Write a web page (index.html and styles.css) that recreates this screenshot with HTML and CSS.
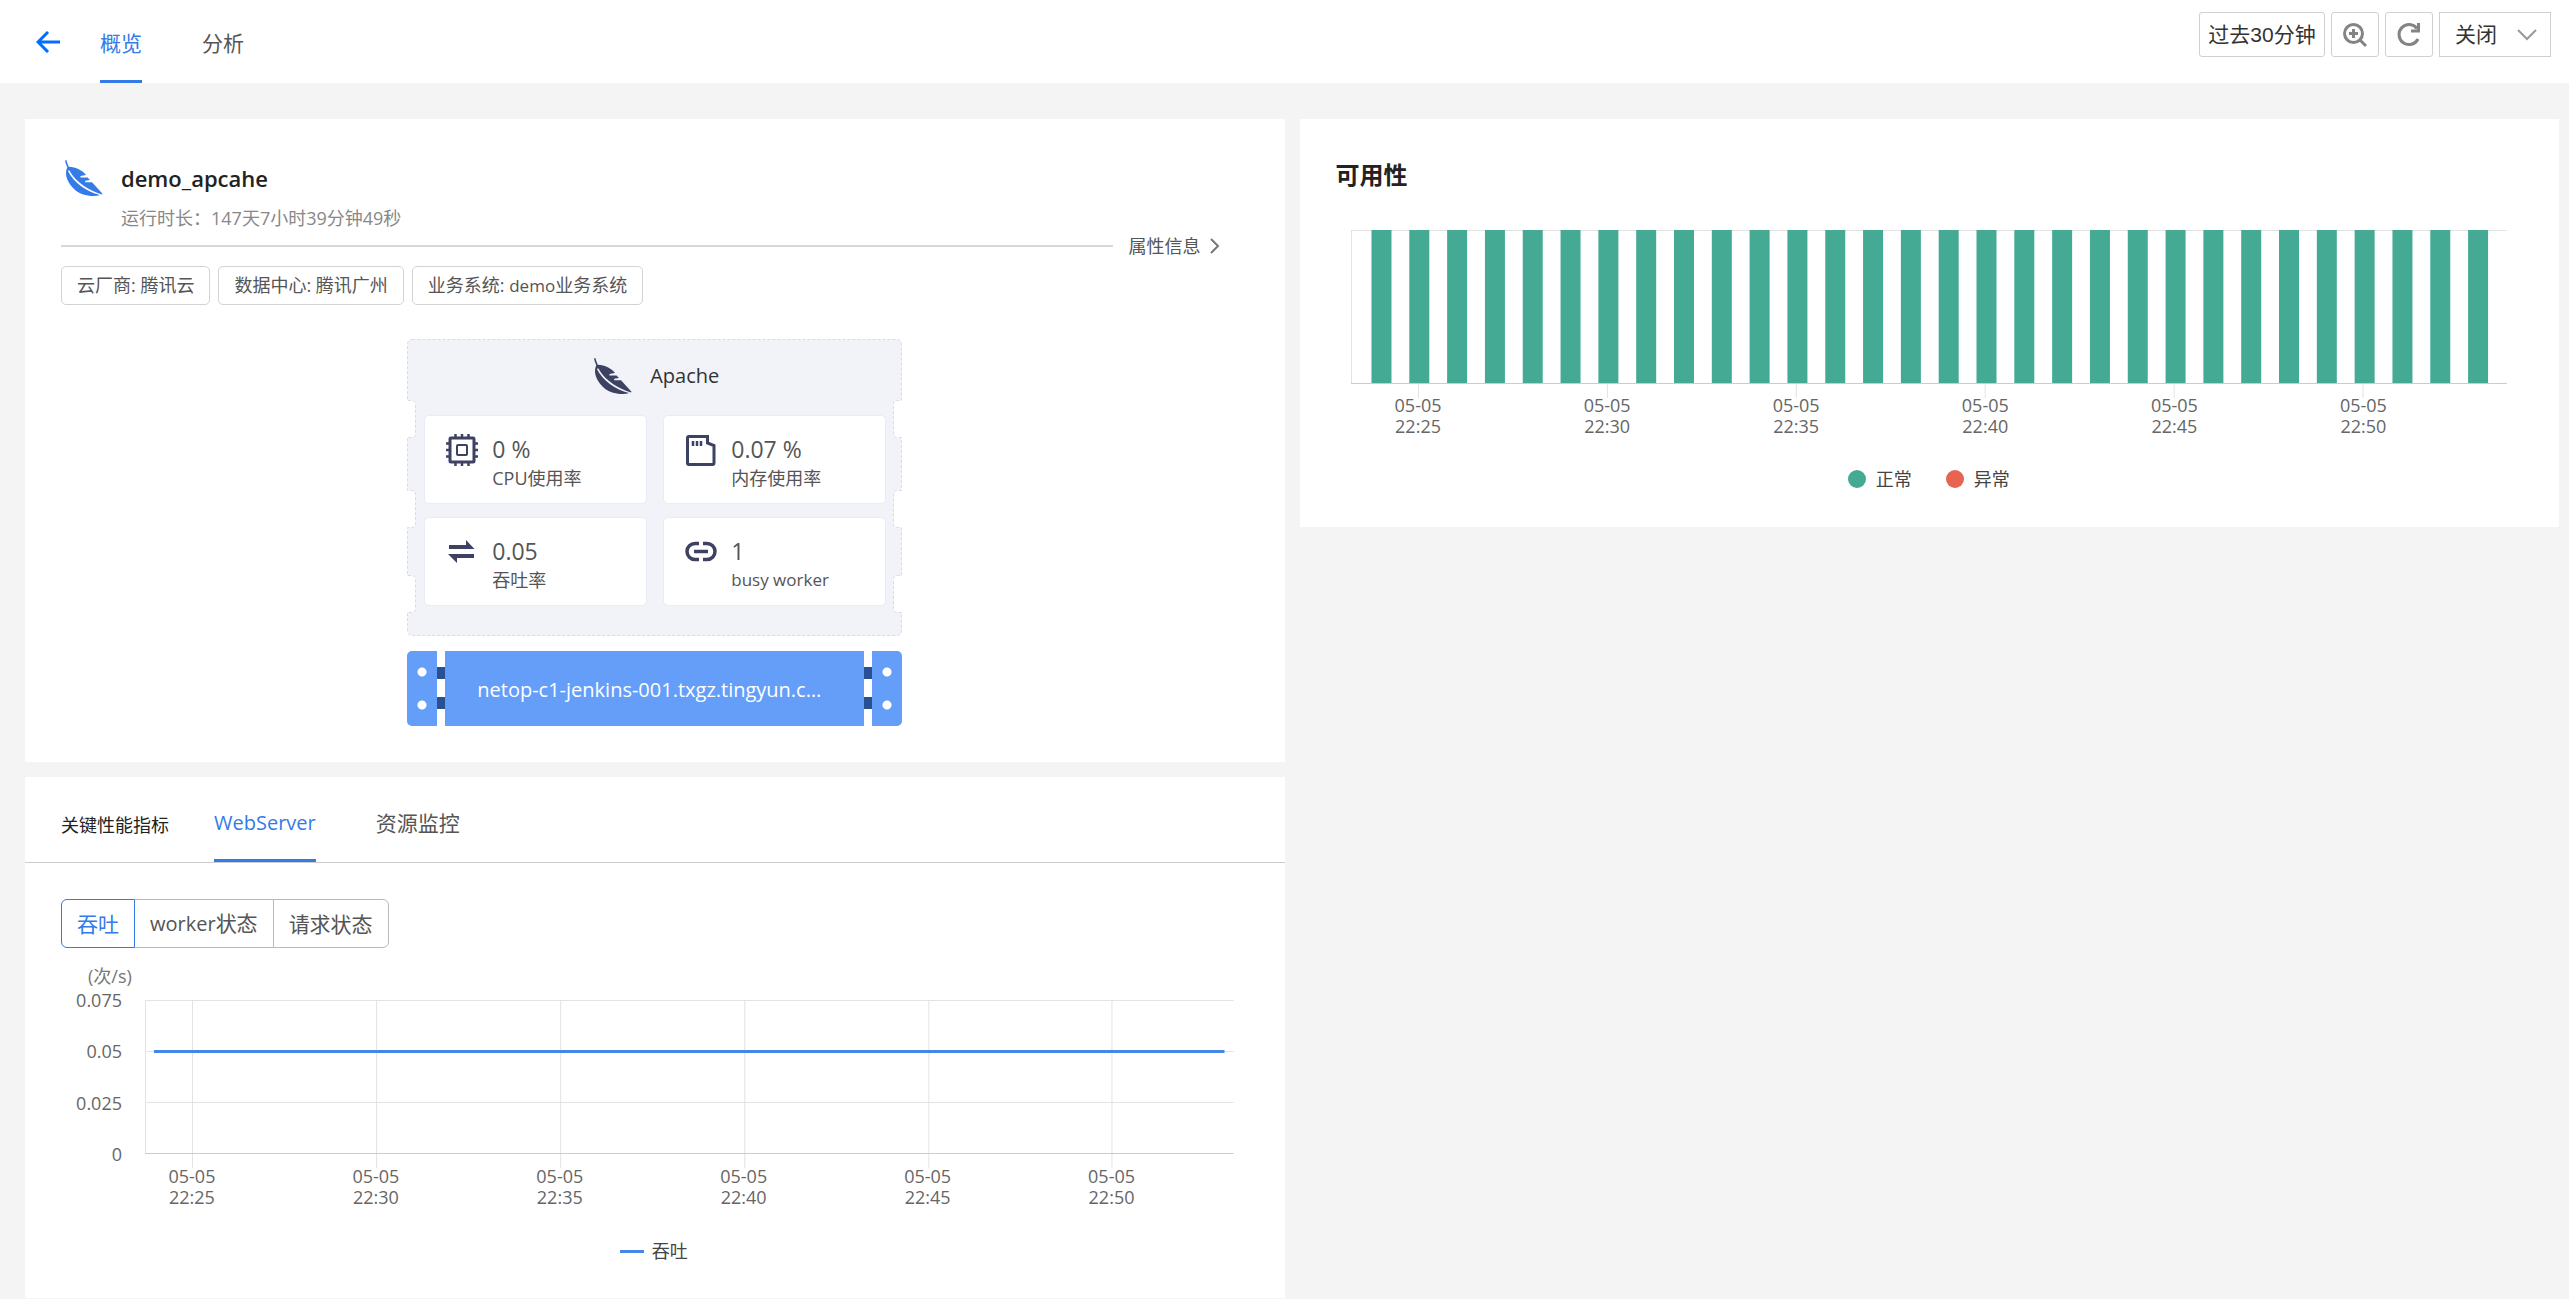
FILE: index.html
```html
<!DOCTYPE html>
<html lang="zh-CN">
<head>
<meta charset="utf-8">
<title>demo_apcahe</title>
<link rel="stylesheet" href="styles.css">
</head>
<body>
<svg class="defs" aria-hidden="true">
  <symbol id="feather" viewBox="0 0 38 36">
    <path d="M0 0.5L1.4 0C2 2.5 2.8 4.8 3.8 6.8C11 7 17.5 10.5 21 15L15.500 16L15.400 17.400L22.500 17.400L25 20L20.200 20.800L20.200 22.200L27 22.200L37.5 33.8L37 34.4C25.5 31 11.500 23.5 4.200 10.200L2.900 10.900C9.500 23.500 21 31 35 35C27 37.500 15.500 35.500 8.500 28.500C1 21 -0.500 13 2.300 7.200C1.200 5 0.500 2.800 0 0.500Z" fill="currentColor"/>
  </symbol>
</svg>

<header class="topbar">
  <button class="back" type="button" aria-label="返回">
    <svg width="24" height="22" viewBox="0 0 24 22"><path d="M12 1L2 11L12 21M2 11H24" fill="none" stroke="#006eff" stroke-width="3"/></svg>
  </button>
  <nav class="tabs">
    <a class="tab active" href="#overview">概览</a>
    <a class="tab" href="#analysis">分析</a>
  </nav>
  <div class="tools">
    <button class="tool range" type="button">过去30分钟</button>
    <button class="tool" type="button" aria-label="放大">
      <svg width="26" height="26" viewBox="0 0 26 26" fill="none" stroke="#848484" stroke-width="3"><circle cx="11.500" cy="11.500" r="9"/><path d="M18 18L24 24M7 11.500H16M11.500 7V16" /></svg>
    </button>
    <button class="tool" type="button" aria-label="刷新">
      <svg width="26" height="26" viewBox="0 0 26 26" fill="none" stroke="#848484" stroke-width="3"><path d="M22 17A10 10 0 1 1 21 6.500"/><path d="M22.500 1V9H15" /></svg>
    </button>
    <div class="select">
      <select aria-label="自动刷新"><option>关闭</option></select>
      <svg class="caret" width="20" height="12" viewBox="0 0 20 12"><path d="M1 1L10 10L19 1" fill="none" stroke="#999" stroke-width="2"/></svg>
    </div>
  </div>
</header>

<main class="board">
  <div class="column">
    <section class="card summary">
      <div class="identity">
        <svg class="feather" aria-hidden="true"><use href="#feather"/></svg>
        <div>
          <h1>demo_apcahe</h1>
          <p class="uptime">运行时长：147天7小时39分钟49秒</p>
        </div>
      </div>
      <div class="rule">
        <hr>
        <a href="#attributes">属性信息<svg width="10" height="16" viewBox="0 0 10 16"><path d="M1 1L8 8L1 15" fill="none" stroke="#777" stroke-width="2"/></svg></a>
      </div>
      <ul class="tags">
        <li>云厂商: 腾讯云</li>
        <li>数据中心: 腾讯广州</li>
        <li>业务系统: <span class="latin">demo</span>业务系统</li>
      </ul>

      <div class="rack">
        <svg class="rack-frame" viewBox="0 0 495 297" aria-hidden="true">
          <path d="M5.500 .5H489.500Q494.500 .5 494.500 5.500V61.500H490.500Q486.500 61.500 486.500 65.500V94.500Q486.500 98.500 490.500 98.500H494.500V151.500H490.500Q486.500 151.500 486.500 155.500V184.500Q486.500 188.500 490.500 188.500H494.500V236.500H490.500Q486.500 236.500 486.500 240.500V269.500Q486.500 273.500 490.500 273.500H494.500V291.500Q494.500 296.500 489.500 296.500H5.500Q.5 296.500 .5 291.500V273.500H4.500Q8.500 273.500 8.500 269.500V240.500Q8.500 236.500 4.500 236.500H.5V188.500H4.500Q8.500 188.500 8.500 184.500V155.500Q8.500 151.500 4.500 151.500H.5V98.500H4.500Q8.500 98.500 8.500 94.500V65.500Q8.500 61.500 4.500 61.500H.5V5.500Q.5 .5 5.500 .5Z" fill="#f2f3f9" stroke="#d9dae3" stroke-dasharray="3 2"/>
        </svg>
        <div class="rack-title">
          <svg class="feather" aria-hidden="true"><use href="#feather"/></svg>
          <h2>Apache</h2>
        </div>
        <div class="metrics">
          <div class="metric">
            <svg width="32" height="32" viewBox="0 0 32 32" fill="none" stroke="#3d4263"><rect x="4" y="4" width="24" height="24" rx="1" stroke-width="3"/><rect x="11" y="11" width="10" height="10" rx="1" stroke-width="2"/><path d="M9.500 0V4M16 0V4M22.500 0V4M9.500 28V32M16 28V32M22.500 28V32M0 9.500H4M0 16H4M0 22.500H4M28 9.500H32M28 16H32M28 22.500H32" stroke-width="2.500"/></svg>
            <div><strong>0 %</strong><span>CPU使用率</span></div>
          </div>
          <div class="metric">
            <svg width="32" height="32" viewBox="0 0 32 32" fill="none" stroke="#3d4263"><path d="M4 2.500H22.500V9L29 11.500V29Q29 30.500 27.500 30.500H4Q2.500 30.500 2.500 29V4Q2.500 2.500 4 2.500Z" stroke-width="3"/><path d="M8 7V12M12 7V12M16 7V12" stroke-width="2.500"/></svg>
            <div><strong>0.07 %</strong><span>内存使用率</span></div>
          </div>
          <div class="metric">
            <svg width="32" height="32" viewBox="0 0 32 32" fill="#3d4263"><path d="M3 9H20V4L28.500 13H3ZM28 18H2L11 27V22H28Z"/></svg>
            <div><strong>0.05</strong><span>吞吐率</span></div>
          </div>
          <div class="metric">
            <svg width="32" height="32" viewBox="0 0 32 32" fill="none" stroke="#3d4263" stroke-width="3.500"><path d="M14 7.500H10A8 8 0 0 0 10 23.500H14M18 7.500H22A8 8 0 0 1 22 23.500H18M9 15.500H23"/></svg>
            <div><strong>1</strong><span class="latin">busy worker</span></div>
          </div>
        </div>
      </div>

      <div class="server">
        <i class="cap"></i><i class="joint"></i>
        <span class="host">netop-c1-jenkins-001.txgz.tingyun.com</span>
        <i class="joint"></i><i class="cap"></i>
      </div>
    </section>

    <section class="card performance">
      <div class="section-head">
        <h2>关键性能指标</h2>
        <nav class="tabs">
          <a class="tab active" href="#webserver"><span class="latin-large">WebServer</span></a>
          <a class="tab" href="#resources">资源监控</a>
        </nav>
      </div>
      <div class="segments">
        <button class="on" type="button">吞吐</button><button type="button"><span class="latin-large">worker</span>状态</button><button type="button">请求状态</button>
      </div>
      <div class="unit">(次/s)</div>
      <div class="line-chart">
        <div class="y-labels"><span>0.075</span><span>0.05</span><span>0.025</span><span>0</span></div>
        <div class="plot-area">
          <svg class="plot" viewBox="0 0 1088 168" preserveAspectRatio="none">
            <path d="M0 .5H1088M0 51.500H1088M0 102.500H1088M.5 0V153M47.500 0V168M231.500 0V168M415.500 0V168M599.500 0V168M783.500 0V168M966.500 0V168" fill="none" stroke="#e3e3e3"/>
            <path d="M0 153.500H1088" stroke="#ccc"/>
            <path d="M9 51.500H1079" stroke="#4785ea" stroke-width="3"/>
          </svg>
          <div class="x-labels"><span>05-05<br>22:25</span><span>05-05<br>22:30</span><span>05-05<br>22:35</span><span>05-05<br>22:40</span><span>05-05<br>22:45</span><span>05-05<br>22:50</span></div>
        </div>
      </div>
      <div class="legend"><span class="dash">吞吐</span></div>
    </section>
  </div>

  <div class="column">
    <section class="card availability">
      <h2>可用性</h2>
      <svg class="plot" viewBox="0 0 1157 168" preserveAspectRatio="none">
        <path d="M0 .5H1157M.5 0V154M67.500 154V168M256.500 154V168M445.500 154V168M634.500 154V168M823.500 154V168M1012.500 154V168" fill="none" stroke="#e3e3e3"/>
        <path d="M0 153.500H1157" stroke="#ccc"/>
        <path d="M20.500 76.500H1138" stroke="#44aa94" stroke-width="153" stroke-dasharray="20 17.830"/>
      </svg>
      <div class="x-labels"><span>05-05<br>22:25</span><span>05-05<br>22:30</span><span>05-05<br>22:35</span><span>05-05<br>22:40</span><span>05-05<br>22:45</span><span>05-05<br>22:50</span></div>
      <div class="legend"><span class="dot ok">正常</span><span class="dot bad">异常</span></div>
    </section>
  </div>
</main>
</body>
</html>
```
FILE: styles.css
```css
* { box-sizing: border-box; }
body {
  margin: 0;
  background: #f4f4f4;
  color: #555;
  font: 18px/24px "Open Sans", "Noto Sans CJK SC", sans-serif;
}
h1, h2, p, ul { margin: 0; padding: 0; }
a { color: inherit; text-decoration: none; }
button, select { font: inherit; color: inherit; background: #fff; }
.defs { display: none; }
.latin { font-size: 17px; }
.latin-large { font-size: 20px; }

.topbar {
  display: flex;
  height: 83px;
  padding: 0 18px 0 36px;
  background: #fff;
}
.back { border: 0; padding: 0; width: 24px; height: 83px; }
.back svg { display: block; }
.tabs { display: flex; gap: 60px; font-size: 21px; }
.tab { display: flex; align-items: center; border-bottom: 3px solid transparent; padding-top: 6px; }
.tab.active { color: #347be8; border-color: #347be8; }
.topbar .tabs { margin-left: 40px; }
.tools { display: flex; gap: 6px; margin: 12px 0 0 auto; align-items: flex-start; font: 21px/24px "Liberation Sans", "Noto Sans CJK SC", sans-serif; color: #333; }
.tool { display: grid; place-items: center; width: 48px; height: 45px; padding: 0; border: 1px solid #d0d0d0; border-radius: 3px; }
.tool.range { width: 126px; }
.select { display: grid; width: 112px; height: 45px; }
.select select { grid-area: 1 / 1; appearance: none; border: 1px solid #d0d0d0; border-radius: 0; padding: 0 15px; }
.caret { grid-area: 1 / 1; place-self: center end; margin-right: 14px; pointer-events: none; }

.board { display: grid; grid-template-columns: 1fr 1fr; gap: 15px; padding: 36px 10px 2px 25px; }
.column { display: flex; flex-direction: column; gap: 15px; }
.card { background: #fff; }

.summary { padding: 41px 36px 36px; }
.identity { display: flex; gap: 18px; padding-left: 4px; }
.feather { width: 38px; height: 36px; color: #347be8; flex: none; }
h1 { font-size: 22px; line-height: 36px; font-weight: 600; color: #222; }
.uptime { margin-top: 10px; color: #888; }
.rule { display: flex; align-items: center; gap: 16px; margin-top: 4px; padding-right: 29px; }
.rule hr { flex: 1; margin: 0; border: 0; height: 2px; background: #d8d8d8; }
.rule a { display: flex; align-items: center; gap: 9px; }
.tags { display: flex; gap: 8px; margin-top: 8px; list-style: none; }
.tags li { padding: 6px 15px; border: 1px solid #d3d3d3; border-radius: 5px; }

.rack { position: relative; width: 495px; height: 297px; margin: 34px auto 15px; padding: 16px 16px 0 17px; }
.rack-frame { position: absolute; inset: 0; width: 100%; height: 100%; }
.rack-title { position: relative; display: flex; justify-content: center; align-items: center; gap: 18px; height: 42px; padding-left: 3px; }
.rack-title .feather { color: #3d4263; }
.rack-title h2 { font-size: 20px; font-weight: 400; color: #333; }
.metrics { position: relative; display: grid; grid-template-columns: 1fr 1fr; gap: 13px 16px; margin-top: 18px; }
.metric { display: flex; gap: 14px; height: 89px; padding: 18px 21px; background: #fff; border: 1px solid #e9ebf5; border-radius: 5px; }
.metric div { display: flex; flex-direction: column; }
.metric strong { font-size: 23px; line-height: 30px; font-weight: 400; }
.metric span { line-height: 28px; }

.server { display: flex; width: 495px; height: 75px; margin: 0 auto; }
.cap { width: 30px; background: radial-gradient(circle at 50% 21px, #fff 4px, transparent 5px), radial-gradient(circle at 50% 54px, #fff 4px, transparent 5px), #659ef8; }
.cap:first-child { border-radius: 5px 0 0 5px; }
.cap:last-child { border-radius: 0 5px 5px 0; }
.joint { width: 8px; background: linear-gradient(transparent 16px, #285093 16px 28px, transparent 28px 46px, #285093 46px 58px, transparent 58px); }
.host { flex: 1; padding: 0 32px; background: #659ef8; color: #fff; font-size: 20px; line-height: 78px; overflow: hidden; text-overflow: ellipsis; white-space: nowrap; }

.section-head { display: flex; align-items: stretch; height: 86px; padding-left: 36px; border-bottom: 1px solid #ccc; }
.section-head h2 { display: flex; align-items: center; margin-right: 45px; padding-top: 10px; font-size: 18px; font-weight: 400; color: #222; }
.section-head .tab { padding-top: 10px; }
.segments { display: flex; margin: 36px 36px 0; font-size: 21px; }
.segments button { height: 49px; padding: 0 15px; border: 1px solid #bbb; margin-left: -1px; }
.segments button:first-child { margin-left: 0; border-radius: 6px 0 0 6px; }
.segments button:last-child { border-radius: 0 6px 6px 0; }
.segments .on { position: relative; color: #347be8; border-color: #347be8; }
.unit { margin: 16px 0 0 63px; color: #777; }
.line-chart { display: flex; gap: 23px; padding: 0 51px 0 36px; }
.y-labels { display: flex; flex-direction: column; justify-content: space-between; align-items: flex-end; width: 61px; height: 178px; color: #666; }
.plot-area { flex: 1; padding-top: 12px; }
.plot { display: block; width: 100%; height: 168px; }
.x-labels { display: grid; grid-template-columns: repeat(6, 1fr); text-align: center; line-height: 21px; color: #666; }
.line-chart .x-labels { margin: -2px 30px 0 -45px; }
.legend { display: flex; justify-content: center; color: #444; }
.legend span { display: flex; align-items: center; }
.dash::before { content: ""; width: 24px; height: 3px; margin-right: 8px; background: #4785ea; }
.performance .legend { margin-top: 31px; padding: 0 2px 35px 0; }

.availability { padding: 38px 52px 0 51px; }
.availability h2 { margin-left: -15px; font-size: 24px; line-height: 36px; color: #222; }
.availability .plot { margin-top: 37px; }
.availability .x-labels { margin: -3px 49px 0 -27px; }
.availability .legend { gap: 34px; margin-top: 30px; padding-bottom: 36px; }
.dot::before { content: ""; width: 18px; height: 18px; margin-right: 10px; border-radius: 50%; }
.ok::before { background: #44aa94; }
.bad::before { background: #e86452; }
```
